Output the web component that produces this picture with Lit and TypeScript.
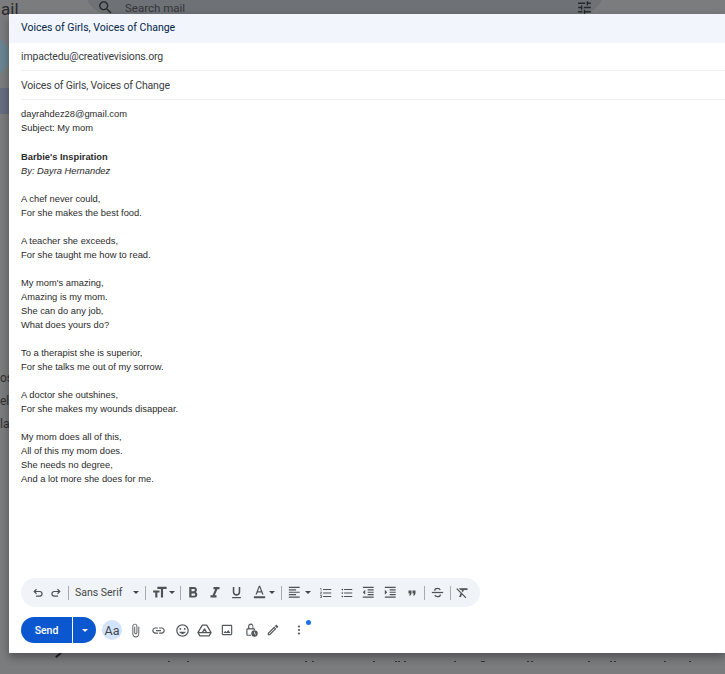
import { LitElement, html, css, svg } from "lit";
import { customElement } from "lit/decorators.js";

const P: Record<string, any> = {
  undo: svg`<path fill="none" stroke="currentColor" stroke-width="2.4" d="M5 9h10.500a4.600 4.600 0 0 1 0 9.200H8M9 4.500L4.500 9 9 13.500"/>`,
  redo: svg`<path fill="none" stroke="currentColor" stroke-width="2.4" d="M19 9H8.500a4.600 4.600 0 0 0 0 9.200H16M15 4.500L19.500 9 15 13.500"/>`,
  size: svg`<path d="M9 4v3h5v12h3V7h5V4H9zm-6 8h3v7h3v-7h3V9H3v3z"/>`,
  bold: svg`<path d="M15.600 10.790c.97-.67 1.650-1.770 1.650-2.790 0-2.260-1.750-4-4-4H7v14h7.040c2.090 0 3.710-1.700 3.710-3.790 0-1.520-.86-2.820-2.150-3.420zM10 6.500h3c.83 0 1.500.67 1.500 1.500s-.67 1.500-1.500 1.500h-3v-3zm3.500 9H10v-3h3.500c.83 0 1.500.67 1.500 1.500s-.67 1.500-1.500 1.500z"/>`,
  italic: svg`<path d="M10 4v3h2.210l-3.420 8H6v3h8v-3h-2.210l3.420-8H18V4z"/>`,
  underline: svg`<path d="M12 17c3.310 0 6-2.690 6-6V3h-2.500v8c0 1.930-1.570 3.500-3.500 3.500S8.500 12.930 8.500 11V3H6v8c0 3.310 2.690 6 6 6zm-7 2v2h14v-2H5z"/>`,
  color: svg`<path d="M11 1L5.500 15h2.250l1.120-3h6.250l1.120 3h2.250L13 1h-2zm-1.380 9L12 3.670 14.380 10H9.620zM3 18h18v3H3z"/>`,
  align: svg`<path d="M15 15H3v2h12v-2zm0-8H3v2h12V7zM3 13h18v-2H3v2zm0 8h18v-2H3v2zM3 3v2h18V3H3z"/>`,
  num: svg`<path d="M2 17h2v.5H3v1h1v.5H2v1h3v-4H2v1zm1-9h1V4H2v1h1v3zm-1 3h1.800L2 13.100v.9h3v-1H3.200L5 10.900V10H2v1zm5-6v2h14V5H7zm0 14h14v-2H7v2zm0-6h14v-2H7v2z"/>`,
  bullet: svg`<path d="M4 10.500c-.83 0-1.500.67-1.500 1.500s.67 1.500 1.500 1.500 1.500-.67 1.500-1.500-.67-1.500-1.500-1.500zm0-6c-.83 0-1.500.67-1.500 1.500S3.170 7.500 4 7.500 5.500 6.830 5.500 6 4.830 4.500 4 4.500zm0 12c-.83 0-1.500.68-1.500 1.500s.68 1.500 1.500 1.500 1.500-.68 1.500-1.500-.67-1.500-1.500-1.500zM7 19h14v-2H7v2zm0-6h14v-2H7v2zm0-8v2h14V5H7z"/>`,
  outdent: svg`<path d="M11 17h10v-2H11v2zm-8-5l4 4V8l-4 4zm0 9h18v-2H3v2zM3 3v2h18V3H3zm8 6h10V7H11v2zm0 4h10v-2H11v2z"/>`,
  indent: svg`<path d="M3 21h18v-2H3v2zM3 8v8l4-4-4-4zm8 9h10v-2H11v2zM3 3v2h18V3H3zm8 6h10V7H11v2zm0 4h10v-2H11v2z"/>`,
  quote: svg`<path d="M6 17h3l2-4V7H5v6h3zm8 0h3l2-4V7h-6v6h3z"/>`,
  strike: svg`<path d="M3 11h18v2H3z"/><path fill="none" stroke="currentColor" stroke-width="2" d="M7.500 9c0-2.200 2-3.700 4.500-3.700 2.200 0 3.700 1 4.300 2.700M16.500 15c0 2.200-2 3.700-4.500 3.700-2.200 0-3.700-1-4.300-2.700"/>`,
  clear: svg`<path d="M3.270 5L2 6.270l6.970 6.970L6.500 19h3l1.570-3.660L16.730 21 18 19.730 3.550 5.270 3.270 5zM6 5v.18L8.820 8h2.400l-.72 1.680 2.100 2.100L14.210 8H20V5H6z"/>`,
  attach: svg`<path d="M16.500 6v11.500c0 2.210-1.790 4-4 4s-4-1.790-4-4V5c0-1.380 1.120-2.500 2.500-2.500s2.500 1.120 2.500 2.500v10.500c0 .55-.45 1-1 1s-1-.45-1-1V6H10v9.500c0 1.380 1.120 2.500 2.500 2.500s2.500-1.120 2.500-2.500V5c0-2.210-1.790-4-4-4S7 2.790 7 5v12.500c0 3.040 2.460 5.500 5.500 5.500s5.500-2.460 5.500-5.500V6h-1.500z"/>`,
  link: svg`<path d="M3.900 12c0-1.710 1.390-3.100 3.100-3.100h4V7H7c-2.760 0-5 2.240-5 5s2.240 5 5 5h4v-1.900H7c-1.710 0-3.100-1.390-3.100-3.100zM8 13h8v-2H8v2zm9-6h-4v1.900h4c1.710 0 3.100 1.390 3.100 3.100s-1.390 3.100-3.100 3.100h-4V17h4c2.760 0 5-2.240 5-5s-2.240-5-5-5z"/>`,
  emoji: svg`<path d="M11.990 2C6.470 2 2 6.480 2 12s4.470 10 9.990 10C17.520 22 22 17.520 22 12S17.520 2 11.990 2zM12 20c-4.420 0-8-3.580-8-8s3.580-8 8-8 8 3.580 8 8-3.580 8-8 8zm3.500-9c.83 0 1.500-.67 1.500-1.500S16.330 8 15.500 8 14 8.670 14 9.500s.67 1.500 1.500 1.500zm-7 0c.83 0 1.500-.67 1.500-1.500S9.330 8 8.500 8 7 8.670 7 9.500 7.670 11 8.500 11zm3.500 6.500c2.330 0 4.310-1.460 5.110-3.500H6.890c.8 2.040 2.780 3.500 5.110 3.500z"/>`,
  drive: svg`<path fill="none" stroke="currentColor" stroke-width="2" stroke-linejoin="round" d="M8.500 3.500h7l7 12-3.200 5H4.700l-3.200-5zM12 9.500l-3.500 6h7zM1.500 15.500h7M15.500 15.500h7"/>`,
  image: svg`<path d="M19 5v14H5V5h14m0-2H5c-1.100 0-2 .9-2 2v14c0 1.100.9 2 2 2h14c1.100 0 2-.9 2-2V5c0-1.100-.9-2-2-2zm-4.860 8.860l-3 3.870L9 13.140 6 17h12l-3.860-5.140z"/>`,
  lock: svg`<path d="M12 1C9.200 1 7 3.200 7 6v3H6c-1.100 0-2 .9-2 2v9c0 1.100.9 2 2 2h6v-2H6v-9h11v1h2v-1c0-1.100-.9-2-2-2h-1V6c0-2.800-1.800-5-4-5zM9 6c0-1.700 1.300-3 3-3s2.500 1.300 2.500 3v3H9V6z"/><circle cx="18" cy="18" r="5.500"/><path d="M17.400 15h1.200v2.800l2 1.200-.6 1-2.600-1.500z" fill="#fff"/>`,
  pen: svg`<path d="M14.060 9.020l.92.92L5.920 19H5v-.92l9.060-9.060M17.660 3c-.25 0-.51.1-.7.29l-1.830 1.830 3.750 3.750 1.830-1.830c.39-.39.39-1.020 0-1.410l-2.340-2.340c-.2-.2-.45-.29-.71-.29zm-3.600 3.190L3 17.250V21h3.750L17.810 9.940l-3.750-3.750z"/>`,
  more: svg`<circle cx="12" cy="5" r="2.200"/><circle cx="12" cy="12" r="2.200"/><circle cx="12" cy="19" r="2.200"/>`,
  tune: svg`<path d="M3 17v2h6v-2H3zM3 5v2h10V5H3zm10 16v-2h8v-2h-8v-2h-2v6h2zM7 9v2H3v2h4v2h2V9H7zm14 4v-2H11v2h10zm-6-4h2V7h4V5h-4V3h-2v6z"/>`,
  search: svg`<path d="M15.500 14h-.79l-.28-.27C15.410 12.590 16 11.110 16 9.500 16 5.910 13.090 3 9.500 3S3 5.910 3 9.500 5.910 16 9.500 16c1.610 0 3.090-.59 4.230-1.570l.27.28v.79l5 4.990L20.490 19l-4.990-5zm-6 0C7.010 14 5 11.990 5 9.500S7.010 5 9.500 5 14 7.010 14 9.500 11.990 14 9.500 14z"/>`,
};

const icon = (n: string, size = 14) =>
  html`<svg class="ic" width=${size} height=${size} viewBox="0 0 24 24" fill="currentColor">${P[n]}</svg>`;

const POEM: string[][] = [
  ["A chef never could,", "For she makes the best food."],
  ["A teacher she exceeds,", "For she taught me how to read."],
  ["My mom's amazing,", "Amazing is my mom.", "She can do any job,", "What does yours do?"],
  ["To a therapist she is superior,", "For she talks me out of my sorrow."],
  ["A doctor she outshines,", "For she makes my wounds disappear."],
  ["My mom does all of this,", "All of this my mom does.", "She needs no degree,", "And a lot more she does for me."],
];

const SPECKS = [168, 187, 305, 312, 373, 395, 398, 404, 454, 481, 483, 527, 531, 588, 610, 614, 664, 689];
const BACK = [
  { t: "os", y: 370 },
  { t: "el", y: 393 },
  { t: "la", y: 416 },
];

/* toolbar items with the page x of their centre; the gap before each comes from these */
type Item = { k: "i" | "s" | "c" | "f"; n?: string; s: number; x: number };
const TOOLS: Item[] = [
  { k: "i", n: "undo", s: 12, x: 38 },
  { k: "i", n: "redo", s: 12, x: 56 },
  { k: "s", s: 1, x: 68.5 },
  { k: "f", s: 47, x: 98.5 },
  { k: "c", s: 6, x: 135.5 },
  { k: "s", s: 1, x: 145.5 },
  { k: "i", n: "size", s: 17, x: 159 },
  { k: "c", s: 6, x: 171.5 },
  { k: "s", s: 1, x: 180.5 },
  { k: "i", n: "bold", s: 18, x: 193 },
  { k: "i", n: "italic", s: 18, x: 215 },
  { k: "i", n: "underline", s: 15, x: 236.5 },
  { k: "i", n: "color", s: 15, x: 259 },
  { k: "c", s: 6, x: 271.5 },
  { k: "s", s: 1, x: 281.5 },
  { k: "i", n: "align", s: 14.5, x: 294.5 },
  { k: "c", s: 6, x: 307.5 },
  { k: "i", n: "num", s: 14, x: 325.5 },
  { k: "i", n: "bullet", s: 14, x: 347 },
  { k: "i", n: "outdent", s: 14.5, x: 368.5 },
  { k: "i", n: "indent", s: 14.5, x: 390 },
  { k: "i", n: "quote", s: 12, x: 412 },
  { k: "s", s: 1, x: 424.5 },
  { k: "i", n: "strike", s: 15, x: 437 },
  { k: "s", s: 1, x: 450.5 },
  { k: "i", n: "clear", s: 15, x: 462.5 },
];

const FOOT: Item[] = [
  { k: "i", n: "attach", s: 15, x: 135 },
  { k: "i", n: "link", s: 15, x: 158 },
  { k: "i", n: "emoji", s: 15, x: 182 },
  { k: "i", n: "drive", s: 15, x: 204 },
  { k: "i", n: "image", s: 14, x: 227 },
  { k: "i", n: "lock", s: 14, x: 251 },
  { k: "i", n: "pen", s: 14, x: 273 },
  { k: "i", n: "more", s: 12, x: 299 },
];

const row = (items: Item[], start: number) => {
  let edge = start;
  return items.map((it) => {
    const ml = it.x - it.s / 2 - edge;
    edge = it.x + it.s / 2;
    const m = `margin-left:${ml}px`;
    if (it.k === "s") return html`<span class="sep" style=${m}></span>`;
    if (it.k === "c") return html`<span class="caret" style=${m}></span>`;
    if (it.k === "f") return html`<span class="font" style=${m}>Sans Serif</span>`;
    return html`<span class="cell" style=${m}>${icon(it.n!, it.s)}</span>`;
  });
};

@customElement("app-root")
export class AppRoot extends LitElement {
  static styles = css`
    :host { display: block; position: relative; width: 725px; height: 674px; overflow: hidden; background: #7c7d7f; font-family: Roboto, sans-serif; }
    .backdrop { position: absolute; inset: 0; background: #7b7c7e; }
    .logo { position: absolute; left: 1px; top: -1px; font: 17px/20px Roboto, sans-serif; color: #2b2c2e; }
    .pill { position: absolute; left: 85px; top: -34px; width: 519px; height: 48px; border-radius: 24px; background: #6e7176; }
    .mag { position: absolute; left: 97px; top: -1px; color: #26282b; }
    .ph { position: absolute; left: 125px; top: 1px; font-size: 11.5px; line-height: 14px; color: #34363a; }
    .tune { position: absolute; left: 576px; top: -1px; color: #26282b; }
    .avatar { position: absolute; left: -30px; top: 36px; width: 40px; height: 40px; border-radius: 50%; background: #6a8592; }
    .rail { position: absolute; left: 0; top: 88px; width: 9px; height: 26px; background: #666d80; }
    .frag { position: absolute; left: 0; font-size: 12px; line-height: 14px; color: #2f3032; }
    .speck { position: absolute; top: 661px; width: 2px; height: 1px; background: #33363a; }
    .tail { position: absolute; left: 55px; top: 654px; width: 7px; height: 2px; background: #222; transform: rotate(-40deg); }

    .modal { position: absolute; left: 9px; top: 14px; right: 0; height: 639px; display: flex; flex-direction: column; background: #fff; box-shadow: 0 4px 10px rgba(0,0,0,.35); border-top-left-radius: 3px; }
    .head { height: 29px; flex: none; box-sizing: border-box; padding: 0 0 3px 12px; display: flex; align-items: center; background: #f2f6fc; color: #041e49; font-size: 10.5px; }
    .field { height: 28px; flex: none; box-sizing: border-box; padding-bottom: 0; display: flex; align-items: center; margin-left: 12px; border-bottom: 1px solid #f0f0f0; color: #3c4043; font-size: 10.5px; letter-spacing: -0.16px; }
    .field.tall { height: 29px; }
    .body { flex: 1; padding: 7px 12px 0; font: 9.33px/14px "Liberation Sans", Arial, sans-serif; color: #2a2a2a; }
    .body p { margin: 0 0 14px; }
    .body p.first { margin-bottom: 15px; }
    .body .t { font-weight: 700; }
    .body .b { font-style: italic; }

    .tb { flex: none; align-self: flex-start; margin-left: 12px; height: 29px; width: 459px; display: flex; align-items: center; background: #f0f4f9; border-radius: 15px; color: #4f5253; }
    .cell { display: flex; flex: none; }
    .sep { flex: none; width: 1px; height: 14px; background: #a8abad; }
    .font { flex: none; width: 47px; white-space: nowrap; font-size: 10.5px; color: #444746; }
    .caret { display: inline-block; flex: none; width: 0; height: 0; border: 3px solid transparent; border-top: 3px solid #444746; border-bottom: 0; }

    .foot { flex: none; height: 46px; display: flex; align-items: center; padding: 0 0 0 12px; color: #55585a; position: relative; }
    .send { width: 51px; height: 26px; flex: none; display: flex; align-items: center; justify-content: center; background: #0b57d0; color: #fff; font-size: 10.5px; font-weight: 500; border-radius: 13px 0 0 13px; }
    .drop { width: 23px; height: 26px; flex: none; margin-left: 1px; display: flex; align-items: center; justify-content: center; background: #0b57d0; border-radius: 0 13px 13px 0; }
    .drop .caret { border-top-color: #fff; }
    .aa { width: 20px; height: 20px; flex: none; margin-left: 6px; border-radius: 50%; background: #d3e3fd; display: flex; align-items: center; justify-content: center; font-size: 12.5px; color: #444746; }
    .dot { position: absolute; left: 297px; top: 13px; width: 5px; height: 5px; border-radius: 50%; background: #1a73e8; }
  `;

  render() {
    return html`
      <div class="backdrop">
        <div class="pill"></div>
        <span class="logo">ail</span>
        <span class="mag">${icon("search", 17)}</span>
        <span class="ph">Search mail</span>
        <span class="tune">${icon("tune", 17)}</span>
        <div class="avatar"></div>
        <div class="rail"></div>
        ${BACK.map((b) => html`<span class="frag" style="top:${b.y + 1}px">${b.t}</span>`)}
        <div class="tail"></div>
        ${SPECKS.map((x) => html`<i class="speck" style="left:${x}px"></i>`)}
      </div>
      <section class="modal">
        <div class="head">Voices of Girls, Voices of Change</div>
        <div class="field">impactedu@creativevisions.org</div>
        <div class="field tall">Voices of Girls, Voices of Change</div>
        <div class="body">
          <p class="first">dayrahdez28@gmail.com<br />Subject: My mom</p>
          <p><span class="t">Barbie's Inspiration</span><br /><span class="b">By: Dayra Hernandez</span></p>
          ${POEM.map((s) => html`<p>${s.map((l, i) => html`${i ? html`<br />` : ""}${l}`)}</p>`)}
        </div>
        <div class="tb">${row(TOOLS, 21)}</div>
        <div class="foot">
          <div class="send">Send</div>
          <div class="drop"><span class="caret"></span></div>
          <div class="aa">Aa</div>
          ${row(FOOT, 122)}
          <i class="dot"></i>
        </div>
      </section>
    `;
  }
}
